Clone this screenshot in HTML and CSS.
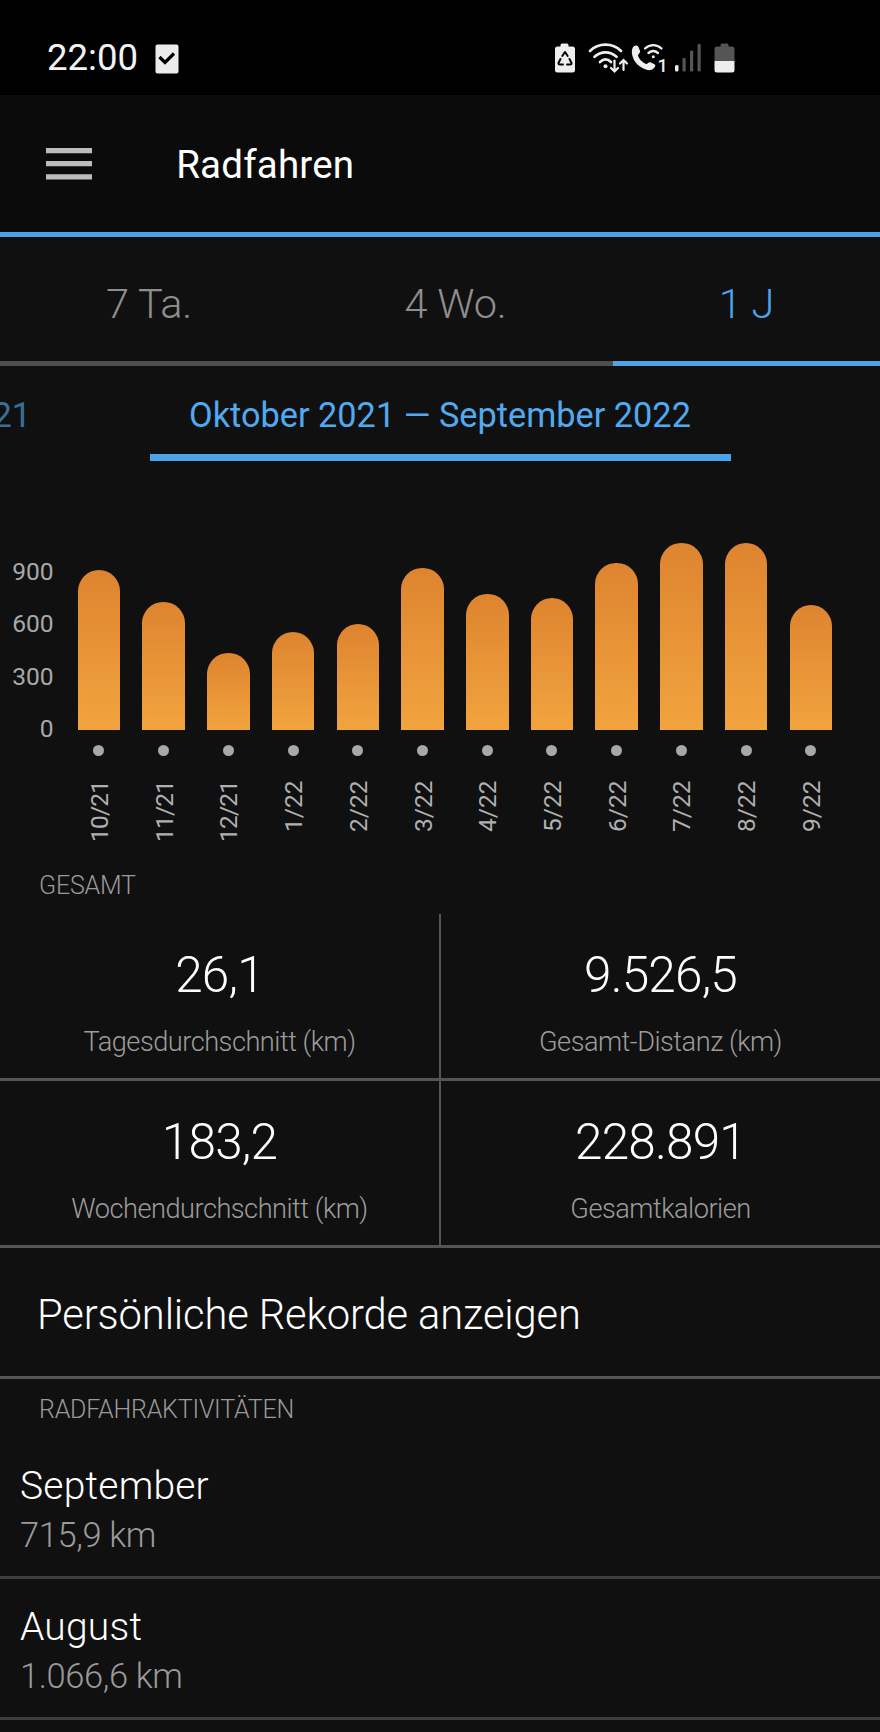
FILE: index.html
```html
<!DOCTYPE html>
<html lang="de">
<head>
<meta charset="utf-8">
<title>Radfahren</title>
<link rel="stylesheet" href="styles.css">
</head>
<body>
<header class="status">
  <span class="clock">22:00</span>
  <svg class="task" width="24" height="30" viewBox="0 0 24 30"><rect x="0.5" y="0.5" width="23" height="29" rx="2" fill="#ececec"/><path d="M4.500 13l5.500 5.500 9-9" fill="none" stroke="#000" stroke-width="3.200"/></svg>
  <svg class="tray" width="182" height="32" viewBox="0 0 182 32">
    <g fill="#eee">
      <path d="M6.500 3V2a1.500 1.500 0 0 1 1.500-1.500h5A1.500 1.500 0 0 1 14.500 2v1.500H18.500a2.500 2.500 0 0 1 2.500 2.500V27a2.500 2.500 0 0 1-2.500 2.500h-15A2.500 2.500 0 0 1 1 27V6a2.500 2.500 0 0 1 2.500-2.500h3z"/>
      <circle cx="51.500" cy="23.300" r="2"/>
      <path d="M79.500 3.500c2-1.500 4-1.500 5 .5l1.500 4c.6 1.700-2 3.500-2 4.500.8 3.500 4.500 7 8 8.500 1.300.3 2.500-2.400 4.500-1.700l3.500 1.700c2 1 1.500 2.500 0 4-2.500 2.800-6 2.700-10 .8C83 22.500 79 17.500 78 11c-.4-3 0-6 1.500-7.500z"/>
      <circle cx="99.300" cy="13.800" r="1.500"/>
      <rect x="121" y="22" width="3.500" height="6.500" rx="1.500"/>
    </g>
    <g fill="none" stroke="#000" stroke-width="2" stroke-linejoin="round" stroke-linecap="round">
      <path d="M8.300 13l2.700-4 2.700 4M15.500 16l2 4q.3 1.500-1.500 1.500h-3M9 21.500H6q-1.800 0-1.500-1.500l2-4"/>
    </g>
    <g fill="none" stroke="#eee" stroke-width="2.700" stroke-linecap="round">
      <path d="M36 8C44.500-.4 58.500-.4 67 8M40.500 13.800c6.500-6 15.500-6 22 0M46 19c3.500-3.300 7.500-3.300 11 0"/>
      <path d="M60.500 17.500V28.500M57 25l3.500 3.500 3.500-3.500M69.500 27V17M66 20.500l3.500-3.500 3.500 3.500" stroke-width="2.200"/>
      <path d="M91 5.500c5-4.500 11.500-4.500 16.500 0M94.500 10c3-2.500 6.500-2.500 9.500 0" stroke-width="2.300"/>
    </g>
    <g fill="#555">
      <rect x="128.500" y="15" width="3.200" height="13.500" rx="1"/><rect x="136" y="7.500" width="3.200" height="21" rx="1"/><rect x="143.500" y="1" width="3.200" height="27.500" rx="1"/>
      <path d="M166.500 3.500V2a1.500 1.500 0 0 1 1.500-1.500h5A1.500 1.500 0 0 1 174.500 2v1.500h3.500a2.500 2.500 0 0 1 2.500 2.500v12h-20V6a2.500 2.500 0 0 1 2.500-2.500z"/>
    </g>
    <path d="M160.500 18h20v9a2.500 2.500 0 0 1-2.500 2.500h-15a2.500 2.500 0 0 1-2.500-2.500z" fill="#eee"/>
    <text class="sim" x="103.500" y="28.500">1</text>
  </svg>
</header>
<div class="appbar">
  <svg class="menu" width="46" height="32" viewBox="0 0 46 32"><path d="M0 0h46v5.300H0zM0 13h46v5.300H0zM0 26.200h46v5.300H0z"/></svg>
  <h1 class="title">Radfahren</h1>
</div>
<nav class="tabs">
  <span class="tab">7 Ta.</span><span class="tab">4 Wo.</span><span class="tab tab-on">1 J</span>
</nav>
<div class="pager">
  <span class="prev">21</span>
  <span class="range">Oktober 2021 — September 2022</span>
</div>
<section class="chart">
  <div class="axis"><span>900</span><span>600</span><span>300</span><span>0</span></div>
  <div class="cols">
    <div class="col"><i class="bar" style="height:160px"></i><i class="dot"></i><span class="month month-long">10/21</span></div>
    <div class="col"><i class="bar" style="height:128px"></i><i class="dot"></i><span class="month month-long">11/21</span></div>
    <div class="col"><i class="bar" style="height:77.500px"></i><i class="dot"></i><span class="month month-long">12/21</span></div>
    <div class="col"><i class="bar" style="height:98px"></i><i class="dot"></i><span class="month">1/22</span></div>
    <div class="col"><i class="bar" style="height:106px"></i><i class="dot"></i><span class="month">2/22</span></div>
    <div class="col"><i class="bar" style="height:162px"></i><i class="dot"></i><span class="month">3/22</span></div>
    <div class="col"><i class="bar" style="height:136px"></i><i class="dot"></i><span class="month">4/22</span></div>
    <div class="col"><i class="bar" style="height:132px"></i><i class="dot"></i><span class="month">5/22</span></div>
    <div class="col"><i class="bar" style="height:167px"></i><i class="dot"></i><span class="month">6/22</span></div>
    <div class="col"><i class="bar" style="height:187px"></i><i class="dot"></i><span class="month">7/22</span></div>
    <div class="col"><i class="bar" style="height:187px"></i><i class="dot"></i><span class="month">8/22</span></div>
    <div class="col"><i class="bar" style="height:125px"></i><i class="dot"></i><span class="month">9/22</span></div>
  </div>
</section>
<h2 class="caption caption-total">GESAMT</h2>
<section class="stats">
  <div class="stat"><span class="value">26,1</span><span class="label">Tagesdurchschnitt (km)</span></div>
  <div class="stat"><span class="value">9.526,5</span><span class="label">Gesamt-Distanz (km)</span></div>
  <div class="stat"><span class="value">183,2</span><span class="label">Wochendurchschnitt (km)</span></div>
  <div class="stat"><span class="value">228.891</span><span class="label">Gesamtkalorien</span></div>
</section>
<div class="records">Persönliche Rekorde anzeigen</div>
<h2 class="caption caption-list">RADFAHRAKTIVITÄTEN</h2>
<div class="entry"><span class="name">September</span><span class="dist">715,9 km</span></div>
<div class="entry"><span class="name">August</span><span class="dist">1.066,6 km</span></div>
</body>
</html>
```
FILE: styles.css
```css
* { box-sizing: border-box; }
body {
  margin: 0;
  width: 880px;
  height: 1732px;
  overflow: hidden;
  background: #101010;
  color: #fff;
  font-family: Roboto, sans-serif;
}
.status {
  display: flex;
  align-items: flex-start;
  height: 95px;
  padding: 43px 144px 0 47px;
  background: #000;
}
.clock { padding-top: 1px; font-size: 36.600px; line-height: 28px; color: #f2f2f2; }
.task { margin: 1px 0 0 17px; }
.tray { margin-left: auto; }
.sim { font: 500 18px Roboto, sans-serif; fill: #eee; }
.appbar {
  display: flex;
  align-items: center;
  height: 142px;
  padding-left: 45.600px;
  background: #0b0b0b;
  border-bottom: 5px solid #4da3e8;
}
.menu { fill: #bcbcbc; }
.title { margin: 3px 0 0 84.600px; font-size: 38.500px; font-weight: 400; line-height: 46px; letter-spacing: 0.200px; }
.tabs { display: grid; grid-template-columns: 306px 307px 267px; height: 129px; }
.tab {
  padding: 42px 8px 0 0;
  border-bottom: 5px solid #4e4e4e;
  text-align: center;
  font-size: 41.500px;
  font-weight: 300;
  line-height: 50px;
  letter-spacing: -0.200px;
  color: #8e8e8e;
}
.tab-on { padding-right: 0; color: #4da3e8; border-color: #4da3e8; }
.pager { position: relative; display: flex; justify-content: center; height: 95px; overflow: hidden; }
.range {
  width: 581px;
  padding-top: 29px;
  border-bottom: 7px solid #4da3e8;
  text-align: center;
  font-size: 34.300px;
  line-height: 40px;
  color: #51aaf0;
}
.prev { position: absolute; right: 849px; top: 29px; font-size: 34.300px; line-height: 40px; color: #397098; }
.chart { display: flex; height: 391px; padding: 82px 37px 0 0; }
.axis { width: 66.600px; flex: none; padding: 2.500px 13px 0 0; text-align: right; font-size: 24.600px; line-height: 52.500px; color: #a8a8a8; }
.axis span { display: block; }
.cols { display: flex; }
.col { display: flex; flex-direction: column; width: 64.730px; align-items: center; }
.bar { flex: none; width: 42.500px; margin-top: auto; border-radius: 21px 21px 0 0; background: linear-gradient(#de842f, #f1a43e); }
.dot { flex: none; width: 11px; height: 11px; margin-top: 15px; border-radius: 50%; background: #a8a8a8; }
.month {
  flex: none;
  height: 96px;
  margin-left: 2px;
  padding-bottom: 25px;
  writing-mode: vertical-rl;
  transform: rotate(180deg);
  text-align: end;
  font-size: 24.500px;
  line-height: 30px;
  color: #b0b0b0;
}
.month-long { letter-spacing: -0.800px; }
.caption { margin: 0; padding-left: 39px; font-size: 25px; font-weight: 300; line-height: 30px; letter-spacing: -0.200px; color: #9a9a9a; }
.caption-total { height: 62px; padding-top: 19px; }
.stats { display: grid; grid-template-columns: 441px 439px; }
.stat { display: flex; flex-direction: column; align-items: center; height: 167px; border-bottom: 3px solid #555; }
.stat:nth-child(odd) { border-right: 2px solid #555; }
.value { margin-top: 32px; font-size: 49.500px; font-weight: 300; line-height: 58px; letter-spacing: -0.800px; }
.label { margin-top: 22px; font-size: 27.200px; font-weight: 300; line-height: 32px; letter-spacing: -0.500px; color: #9c9c9c; }
.records {
  height: 131px;
  padding: 42px 0 0 37px;
  border-bottom: 3px solid #555;
  font-size: 41.700px;
  font-weight: 300;
  line-height: 50px;
  letter-spacing: -0.130px;
}
.caption-list { height: 59px; padding-top: 16px; }
.entry { display: flex; flex-direction: column; height: 141px; padding: 25px 0 0 20px; border-bottom: 3px solid #3d3d3d; font-weight: 300; }
.name { font-size: 39px; line-height: 46px; letter-spacing: 0.200px; }
.dist { margin-top: 6px; font-size: 34.500px; line-height: 40px; letter-spacing: -0.400px; color: #9a9a9a; }
```
